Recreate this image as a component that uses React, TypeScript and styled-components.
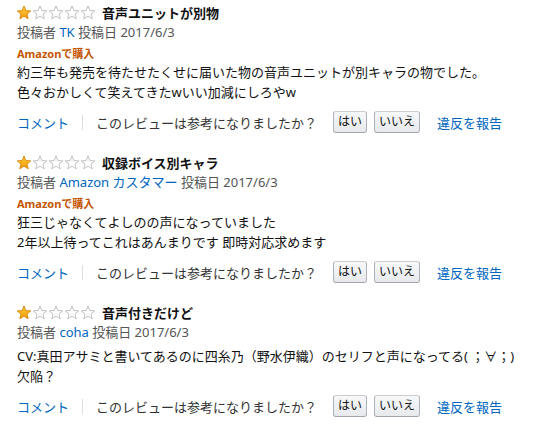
import styled, { createGlobalStyle } from 'styled-components'

const GlobalStyle = createGlobalStyle`
    body {
        margin: 0;
        background: #fff;
        font-family: "Noto Sans", "Noto Sans CJK JP", sans-serif;
        font-size: 13px;
        color: #111;
    }
`

type ReviewData = {
    title: string
    author: string
    verified: boolean
    lines: string[]
}

const reviews: ReviewData[] = [
    {
        title: '音声ユニットが別物',
        author: 'TK',
        verified: true,
        lines: [
            '約三年も発売を待たせたくせに届いた物の音声ユニットが別キャラの物でした。',
            '色々おかしくて笑えてきたwいい加減にしろやw',
        ],
    },
    {
        title: '収録ボイス別キャラ',
        author: 'Amazon カスタマー',
        verified: true,
        lines: ['狂三じゃなくてよしのの声になっていました', '2年以上待ってこれはあんまりです 即時対応求めます'],
    },
    {
        title: '音声付きだけど',
        author: 'coha',
        verified: false,
        lines: ['CV:真田アサミと書いてあるのに四糸乃（野水伊織）のセリフと声になってる( ；∀；)', '欠陥？'],
    },
]

const Star = ({ filled }: { filled: boolean }) => (
    <svg width="16" height="15" viewBox="0 0 16 15">
        <defs>
            <linearGradient id="starGold" x1="0" y1="0" x2="0" y2="1">
                <stop offset="0" stopColor="#ffce3a" />
                <stop offset="1" stopColor="#f29a0c" />
            </linearGradient>
        </defs>
        <path
            d="M8 1 L9.9 5.6 L14.8 5.9 L11 9 L12.2 13.8 L8 11.2 L3.8 13.8 L5 9 L1.2 5.9 L6.1 5.6 Z"
            fill={filled ? 'url(#starGold)' : '#fff'}
            stroke={filled ? '#d9860b' : '#b9b9b9'}
            strokeWidth="0.9"
            strokeLinejoin="round"
        />
    </svg>
)

const Page = styled.div`
    padding: 3px 17px 0;
`

const Review = styled.div`
    margin-bottom: 19px;
`

const TitleRow = styled.div`
    display: flex;
    align-items: center;
    height: 19px;
`

const Stars = styled.span`
    display: flex;
    margin-right: 6px;
    margin-left: -1px;
`

const Title = styled.span`
    font-weight: bold;
    font-size: 13px;
    color: #111;
`

const Meta = styled.div`
    line-height: 20px;
    color: #555;
`

const Link = styled.a`
    color: #0066c0;
    text-decoration: none;
`

const Content = styled.div`
    margin-top: 4px;
`

const Verified = styled.div`
    font-size: 11px;
    font-weight: bold;
    color: #c45500;
    line-height: 16px;
`

const Body = styled.div`
    line-height: 20px;
    color: #111;
`

const Actions = styled.div`
    display: flex;
    align-items: center;
    height: 24px;
    margin-top: 8px;
    color: #333;
`

const Divider = styled.span`
    width: 1px;
    height: 15px;
    background: #ddd;
    margin: 0 13px;
`

const Question = styled.span`
    margin-right: 16px;
`

const VoteButton = styled.button`
    font-family: inherit;
    font-size: 12px;
    color: #111;
    height: 22px;
    padding: 0 4px;
    margin-right: 7px;
    border: 1px solid #adb1b8;
    border-color: #cdcdcd #adb1b8 #a2a6ac;
    border-radius: 3px;
    background: linear-gradient(to bottom, #f7f8fa, #e7e9ec);
    line-height: 20px;
`

const Report = styled(Link)`
    margin-left: 10px;
`

export default function App() {
    return (
        <>
            <GlobalStyle />
            <Page>
                {reviews.map((r) => (
                    <Review key={r.title}>
                        <TitleRow>
                            <Stars>
                                {[0, 1, 2, 3, 4].map((i) => (
                                    <Star key={i} filled={i === 0} />
                                ))}
                            </Stars>
                            <Title>{r.title}</Title>
                        </TitleRow>
                        <Meta>
                            投稿者 <Link>{r.author}</Link> 投稿日 2017/6/3
                        </Meta>
                        <Content>
                            {r.verified && <Verified>Amazonで購入</Verified>}
                            <Body>
                                {r.lines.map((l) => (
                                    <div key={l}>{l}</div>
                                ))}
                            </Body>
                        </Content>
                        <Actions>
                            <Link>コメント</Link>
                            <Divider />
                            <Question>このレビューは参考になりましたか？</Question>
                            <VoteButton>はい</VoteButton>
                            <VoteButton>いいえ</VoteButton>
                            <Report>違反を報告</Report>
                        </Actions>
                    </Review>
                ))}
            </Page>
        </>
    )
}
